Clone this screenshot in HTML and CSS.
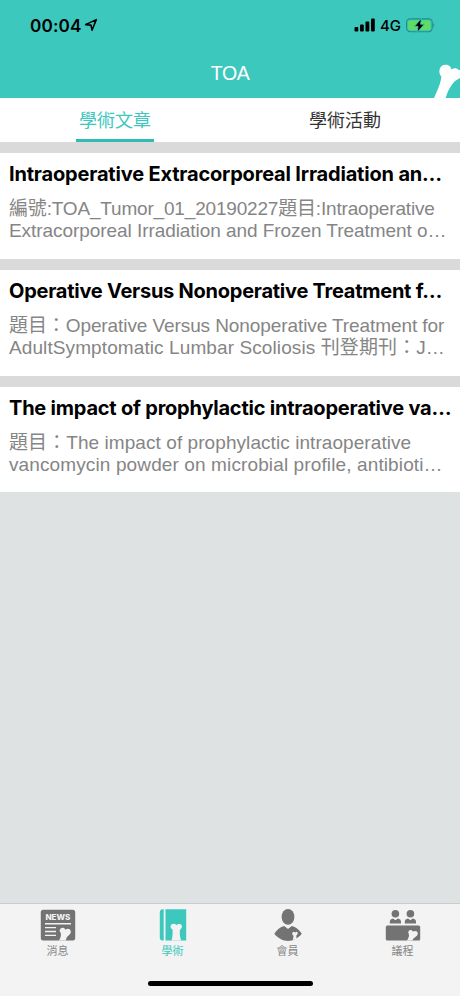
FILE: index.html
```
<!DOCTYPE html>
<html lang="zh-Hant">

<head>
    <meta charset="UTF-8">
    <meta name="viewport" content="width=device-width, initial-scale=1.0">
    <title>TOA</title>
    <link rel="stylesheet" href="styles.css">
</head>

<body>
    <!-- 頂部 -->
    <header class="header">
        <div class="status">
            <span class="time">00:04</span>
            <svg class="location" width="14" height="14" viewBox="0 0 14 14">
                <path d="M1.6 6.6 L12.3 1.6 L8 12.2 L7 7.1 Z" fill="none" stroke="#000" stroke-width="1.6" stroke-linejoin="round"/>
            </svg>
            <svg class="signal" width="22" height="14" viewBox="0 0 22 14">
                <rect x="0.5" y="9" width="3.8" height="4.5" rx="1"/>
                <rect x="6" y="6.5" width="3.8" height="7" rx="1"/>
                <rect x="11.5" y="3.5" width="3.8" height="10" rx="1"/>
                <rect x="17" y="0.5" width="3.8" height="13" rx="1"/>
            </svg>
            <span class="network">4G</span>
            <svg class="battery" width="30" height="15" viewBox="0 0 30 15">
                <rect x="0.6" y="0.9" width="25.6" height="12.8" rx="3.6" fill="none" stroke="#258c85" stroke-width="1.1"/>
                <rect x="2.3" y="2.5" width="22.2" height="9.6" rx="2" fill="#5fdc62"/>
                <path d="M27.4 5 Q29.3 7.3 27.4 9.6 Z" fill="#258c85"/>
                <path d="M15.5 0.3 L8.4 8.4 H12 L11.1 14.6 L18.4 6.2 H14.6 Z" fill="#000" stroke="#3cc8bd" stroke-width="0.9"/>
            </svg>
        </div>
        <h1 class="title">TOA</h1>
        <svg class="bone" width="26" height="34" viewBox="0 0 26 34">
            <path d="M0 34 C3.5 26 6.8 19 7.4 12.4 C4.6 10.4 4.6 4 8 1.8 C12 -.6 17 1.4 17.4 5.4 C20 3.8 23 3.8 24.2 5.8 L26 6.2 V14 C23 15.8 20.6 17 18.4 20 C15.2 24.4 13.2 28.6 11.6 34 Z"/>
        </svg>
    </header>

    <!-- 分頁 -->
    <nav class="tabs">
        <a class="tab active"><span>學術文章</span></a>
        <a class="tab"><span>學術活動</span></a>
    </nav>

    <!-- 文章列表 -->
    <main class="list">
        <article class="card">
            <h2 class="t1">Intraoperative Extracorporeal Irradiation an…</h2>
            <p class="a1">編號:TOA_Tumor_01_20190227題目:Intraoperative</p>
            <p class="a2">Extracorporeal Irradiation and Frozen Treatment o…</p>
        </article>
        <article class="card">
            <h2 class="t2">Operative Versus Nonoperative Treatment f…</h2>
            <p class="b1">題目：Operative Versus Nonoperative Treatment for</p>
            <p class="b2">AdultSymptomatic Lumbar Scoliosis 刊登期刊：J…</p>
        </article>
        <article class="card">
            <h2 class="t3">The impact of prophylactic intraoperative va…</h2>
            <p class="c1">題目：The impact of prophylactic intraoperative</p>
            <p class="c2">vancomycin powder on microbial profile, antibioti…</p>
        </article>
    </main>

    <!-- 底部導航 -->
    <footer class="footer">
        <div class="menu">
            <a class="item">
                <svg width="36" height="32" viewBox="0 0 36 32">
                    <rect x="0.8" y="0.8" width="34.4" height="30.6" rx="2.5" fill="#737373"/>
                    <text class="news" x="5.4" y="11" textLength="25" lengthAdjust="spacingAndGlyphs">NEWS</text>
                    <path d="M5 14.8 H31 M5 18.6 H16 M5 22.5 H16 M5 26.4 H16" stroke="#f3f3f3" stroke-width="1.4"/>
                    <path d="M19 31.4 C20.8 28.7 21.5 25.8 20.5 23.5 C18.5 21.5 20.5 18.3 23.2 18.8 C24.5 19 25 20 25.4 20.8 C28 18.6 31.4 20.6 30.8 23.6 C30.5 26 26.8 26.4 25.8 31.4 Z" fill="#f3f3f3"/>
                </svg>
                <span>消息</span>
            </a>
            <a class="item active">
                <svg width="36" height="32" viewBox="0 0 36 32">
                    <path d="M8.7 0.2 V31.6 H7.5 Q4.8 31.4 4.8 28.5 V3.5 Q4.8 0.4 7.5 0.2 Z M10.5 0.2 H31.2 V31.6 H10.5 Z" fill="#3cc8bd"/>
                    <path d="M16.7 31.6 C17.5 27 18 23.2 17.5 20.4 C14.2 18.8 15.4 14.3 19 14.8 C20.4 14.9 21 15.8 21.4 16.2 C22.6 14.4 26.4 14.4 26.9 16.9 C27.4 19 25.7 19.8 25 20.8 C24.3 24 25.2 28 26 31.6 Z" fill="#f3f3f3"/>
                </svg>
                <span>學術</span>
            </a>
            <a class="item">
                <svg width="36" height="32" viewBox="0 0 36 32">
                    <ellipse cx="18" cy="7.9" rx="6.4" ry="7.9" fill="#737373"/>
                    <path d="M4.3 24.8 C7 20.8 10 17.8 14.2 17 L18 20 L21.8 17 C26 17.8 29.2 20.8 31.8 24.8 C28 29.5 23 32 18 32 C13 32 8 29.5 4.3 24.8 Z" fill="#737373"/>
                    <path d="M22.8 31 L23.6 26.7 C21.8 26 21.8 23.2 23.7 22.8 L25 23.5 L26.5 22.7 C28.2 23 28.1 25.5 26.3 26.6 L26.5 30 Z" fill="#f3f3f3"/>
                </svg>
                <span>會員</span>
            </a>
            <a class="item">
                <svg width="36" height="32" viewBox="0 0 36 32">
                    <g fill="#737373">
                        <circle cx="10.4" cy="4.7" r="3.8"/>
                        <circle cx="25.4" cy="4.7" r="3.8"/>
                        <path d="M4.8 14.5 V12.5 Q5 10 8 9.4 L10.4 11.3 L12.8 9.4 Q15.8 10 16 12.5 V14.5 Z"/>
                        <path d="M19.8 14.5 V12.5 Q20 10 23 9.4 L25.4 11.3 L27.8 9.4 Q30.8 10 31 12.5 V14.5 Z"/>
                        <rect x="0.8" y="16.6" width="34.4" height="14.8" rx="1.5"/>
                    </g>
                    <path d="M22 31.4 C23.8 28.8 24.5 26.8 23.7 24.8 C22.5 22.8 24.3 20.5 26.6 21.2 L28 22.6 C30.5 21.3 33.3 22.5 32.7 25.2 C32.2 27.4 29 28 27.3 31.4 Z" fill="#f3f3f3"/>
                </svg>
                <span>議程</span>
            </a>
        </div>
        <div class="home-bar"></div>
    </footer>
</body>

</html>
```
FILE: styles.css
```
* {
    margin: 0;
    padding: 0;
    box-sizing: border-box;
}

body {
    display: flex;
    flex-direction: column;
    width: 460px;
    height: 996px;
    overflow: hidden;
    background-color: #dee2e3;
    font-family: "Liberation Sans", "Noto Sans CJK TC", sans-serif;
}

/* 頂部 */
.header {
    position: relative;
    height: 98px;
    background-color: #3cc8bd;
}

.status {
    display: flex;
    align-items: center;
    height: 50px;
    padding: 0 24px 0 30px;
    font-family: Inter, sans-serif;
}

.time {
    width: 51px;
    font-size: 17.2px;
    font-weight: 600;
    letter-spacing: 0.1px;
}

.location {
    margin-left: 3px;
}

.signal {
    margin-left: auto;
}

.network {
    width: 20px;
    margin: 0 6px 0 4px;
    font-size: 15px;
    font-weight: 500;
    white-space: nowrap;
}

.title {
    color: #fff;
    font-size: 19.5px;
    font-weight: normal;
    letter-spacing: -0.4px;
    line-height: 46px;
    text-align: center;
}

/* 右上角的骨頭 */
.bone {
    position: absolute;
    right: 0;
    bottom: 0;
    fill: #fff;
}

/* 分頁 */
.tabs {
    display: flex;
    height: 44px;
    background-color: #fff;
}

.tab {
    display: flex;
    flex: 1;
    justify-content: center;
    color: #333;
    font-family: "Noto Sans CJK TC", sans-serif;
    font-size: 18px;
    line-height: 43px;
}

.tab span {
    width: 78px;
    height: 44px;
    text-align: center;
}

.tab.active span {
    color: #3cc8bd;
    border-bottom: 3px solid #2fbdb3;
}

/* 文章列表 */
.list {
    display: flex;
    flex-direction: column;
    gap: 11px;
    padding-top: 11px;
    background-color: #dadada;
}

.card {
    height: 106px;
    padding: 9px 9px 0;
    background-color: #fff;
    white-space: nowrap;
}

.card:last-child {
    height: 105px;
}

.card h2 {
    height: 36px;
    font-family: Inter, sans-serif;
    font-size: 20px;
    font-weight: 700;
    line-height: 25px;
}

.card p {
    height: 22px;
    color: #858585;
    font-size: 19px;
    line-height: 22px;
}

/* 每一行的字距 */
.card .t1 {
    letter-spacing: -0.18px;
}

.card .t2 {
    letter-spacing: -0.25px;
}

.card .t3 {
    letter-spacing: -0.22px;
}

.card .a1 {
    letter-spacing: -0.18px;
}

.card .a2 {
    letter-spacing: -0.06px;
}

.card .b1 {
    letter-spacing: -0.09px;
}

.card .b2 {
    letter-spacing: 0.1px;
}

.card .c1 {
    letter-spacing: 0.07px;
}

.card .c2 {
    letter-spacing: 0.12px;
}

/* 底部導航 */
.footer {
    height: 93px;
    margin-top: auto;
    border-top: 1px solid #c9cdce;
    background-color: #f3f3f3;
}

.menu {
    display: flex;
    height: 77px;
    padding-top: 5px;
}

.item {
    display: flex;
    flex: 1;
    flex-direction: column;
    align-items: center;
    color: #858585;
    font-family: "Noto Sans CJK TC", sans-serif;
    font-size: 11px;
    line-height: 18px;
}

.item.active {
    color: #3cc8bd;
}

.news {
    fill: #f3f3f3;
    font-family: Inter, sans-serif;
    font-size: 7.6px;
    font-weight: 800;
}

.home-bar {
    width: 165px;
    height: 5px;
    margin: 0 auto;
    border-radius: 3px;
    background-color: #000;
}
```
